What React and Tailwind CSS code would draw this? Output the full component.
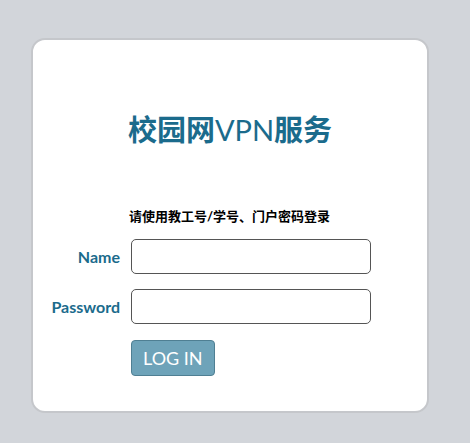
export default function App() {
  return (
    <div className="min-h-[443px] w-[470px] bg-[#d2d5da] pt-[38px] pl-[31px]" style={{ fontFamily: 'Lato, "Noto Sans CJK SC", sans-serif' }}>
      <div className="w-[398px] h-[375px] bg-white border-2 border-[#c5c7cb] rounded-[14px] flex flex-col">
        <h1 className="mt-[72px] text-center text-[29px] leading-[36px] text-[#1b6b8c]">
          <span className="font-bold">校园网</span>
          <span className="font-normal">VPN</span>
          <span className="font-bold">服务</span>
        </h1>
        <p className="mt-[59px] pl-[96px] text-[13px] leading-[18px] font-bold text-black">请使用教工号/学号、门户密码登录</p>
        <div className="mt-[14px] grid grid-cols-[87px_240px] gap-x-[11px] gap-y-[15px] items-center">
          <label className="text-right text-[16px] font-bold text-[#1b6b8c]">Name</label>
          <input className="h-[35px] border border-[#555] rounded-[5px] bg-white" />
          <label className="text-right text-[16px] font-bold text-[#1b6b8c]">Password</label>
          <input type="password" className="h-[35px] border border-[#555] rounded-[5px] bg-white" />
          <div />
          <div className="mt-[1px]">
            <button className="h-[36px] px-[11px] bg-[#6ea3b9] border border-[#4f7f93] rounded-[4px] text-white text-[18px] leading-[20px]">LOG IN</button>
          </div>
        </div>
      </div>
    </div>
  )
}
